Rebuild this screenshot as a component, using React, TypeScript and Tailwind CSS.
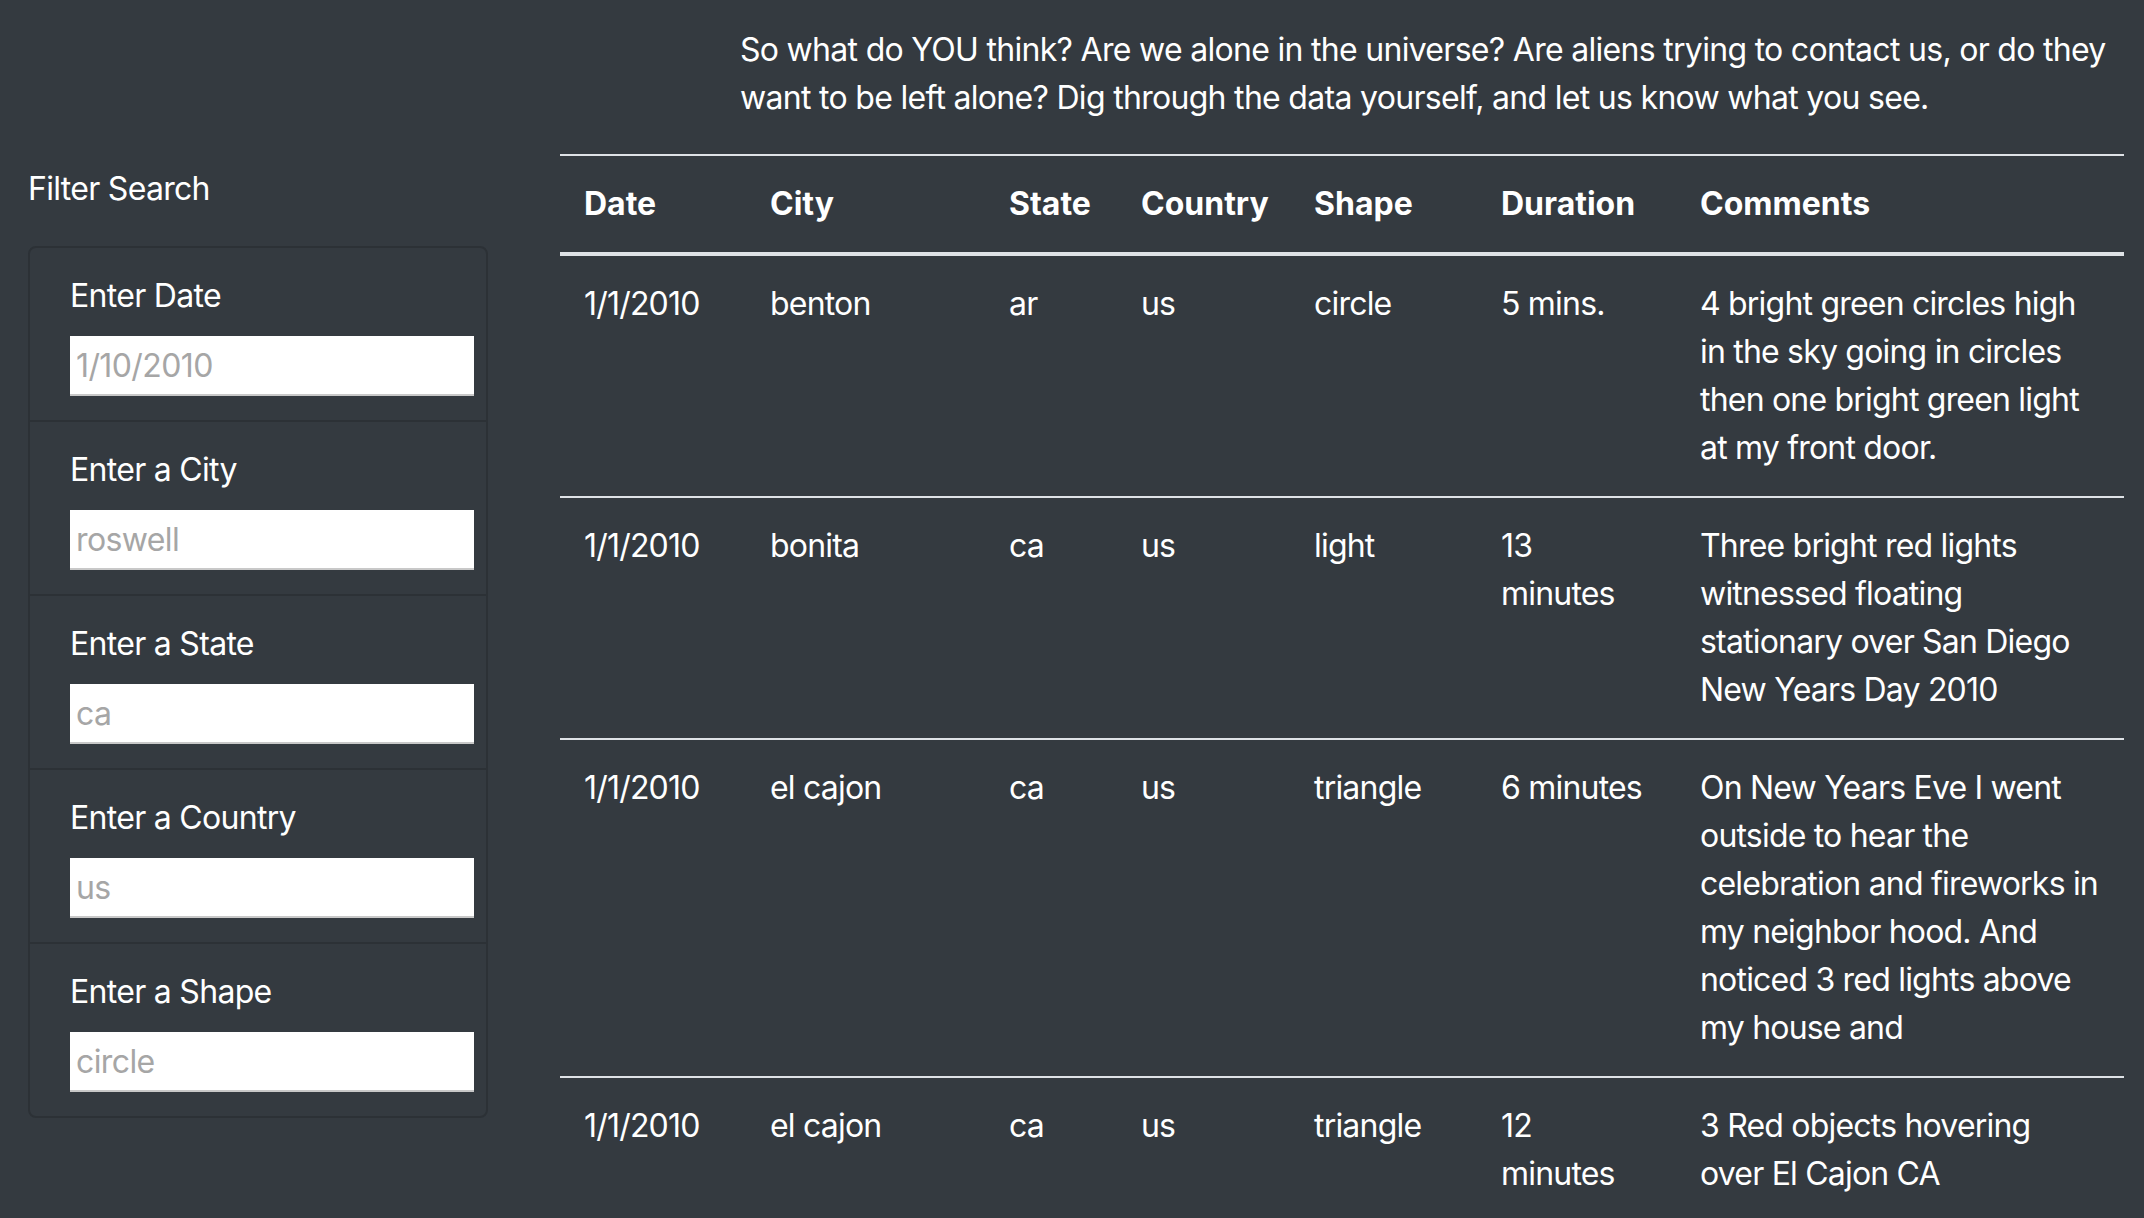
import React from "react";

const filters = [
  { label: "Enter Date", placeholder: "1/10/2010" },
  { label: "Enter a City", placeholder: "roswell" },
  { label: "Enter a State", placeholder: "ca" },
  { label: "Enter a Country", placeholder: "us" },
  { label: "Enter a Shape", placeholder: "circle" },
];

const rows = [
  ["1/1/2010", "benton", "ar", "us", "circle", "5 mins.", "4 bright green circles high in the sky going in circles then one bright green light at my front door."],
  ["1/1/2010", "bonita", "ca", "us", "light", "13 minutes", "Three bright red lights witnessed floating stationary over San Diego New Years Day 2010"],
  ["1/1/2010", "el cajon", "ca", "us", "triangle", "6 minutes", "On New Years Eve I went outside to hear the celebration and fireworks in my neighbor hood. And noticed 3 red lights above my house and"],
  ["1/1/2010", "el cajon", "ca", "us", "triangle", "12 minutes", "3 Red objects hovering over El Cajon CA"],
];

const headers = ["Date", "City", "State", "Country", "Shape", "Duration", "Comments"];
const widths = [186, 239, 132, 173, 187, 199, 448];

export default function App() {
  return (
    <div className="h-[1218px] w-[2144px] overflow-hidden bg-[#343a40] text-white font-['Inter','Noto_Sans',sans-serif] text-[32px] leading-[48px] tracking-[-0.7px]">
      <p className="ml-[740px] mr-[20px] pt-[26px] mb-[32px]">
        So what do YOU think? Are we alone in the universe? Are aliens trying to contact us, or do they want to be left alone? Dig through the data yourself, and let us know what you see.
      </p>
      <div className="flex">
        <aside className="w-[560px] shrink-0 pl-[28px]">
          <h5 className="mt-[11px] mb-[33px] font-normal">Filter Search</h5>
          <ul className="w-[460px] rounded-[8px] border-2 border-[#2c3136]">
            {filters.map((f, i) => (
              <li
                key={f.label}
                className={
                  i < filters.length - 1
                    ? "px-[40px] py-[24px] border-b-2 border-[#2c3136]"
                    : "px-[40px] py-[24px]"
                }
              >
                <label className="block mb-[16px]">{f.label}</label>
                <input
                  type="text"
                  placeholder={f.placeholder}
                  className="block w-[404px] h-[60px] bg-white text-black pl-[6px] text-[32px] tracking-[-0.6px] border-b-2 border-[#c8c8c8] placeholder:text-[#a6a6a6] outline-none"
                />
              </li>
            ))}
          </ul>
        </aside>
        <table className="w-[1564px] table-fixed border-collapse">
          <colgroup>
            {widths.map((w, i) => (
              <col key={i} style={{ width: w }} />
            ))}
          </colgroup>
          <thead>
            <tr>
              {headers.map((h) => (
                <th
                  key={h}
                  className="text-left font-bold tracking-normal px-[24px] py-[24px] align-top border-t-2 border-b-4 border-[#dee2e6]"
                >
                  {h}
                </th>
              ))}
            </tr>
          </thead>
          <tbody>
            {rows.map((r, ri) => (
              <tr key={ri}>
                {r.map((c, ci) => (
                  <td key={ci} className="px-[24px] py-[24px] align-top tracking-[-0.8px] border-t-2 border-[#dee2e6]">
                    {c}
                  </td>
                ))}
              </tr>
            ))}
          </tbody>
        </table>
      </div>
    </div>
  );
}
